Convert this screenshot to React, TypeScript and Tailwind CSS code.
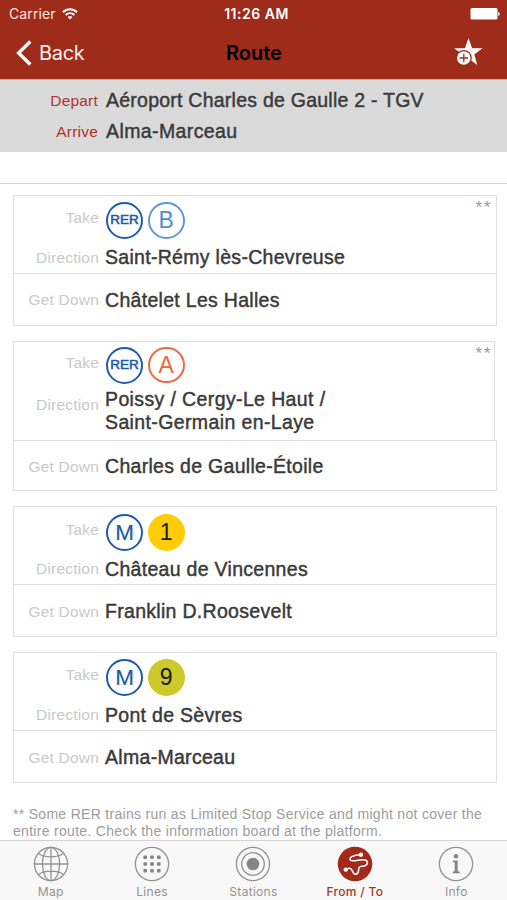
import type { ReactNode } from "react";

type Leg = {
	network: "RER" | "M";
	line: string;
	lineClass: string;
	direction: string[];
	getDown: string;
	limited?: boolean;
	cardClass: string;
	takeClass: string;
};

const legs: Leg[] = [
	{
		network: "RER",
		line: "B",
		lineClass: "border-2 border-[#5b9bd5] text-[#4d8fce]",
		direction: ["Saint-Rémy lès-Chevreuse"],
		getDown: "Châtelet Les Halles",
		limited: true,
		cardClass: "h-[131px]",
		takeClass: "pt-[6px] h-[47px]",
	},
	{
		network: "RER",
		line: "A",
		lineClass: "border-2 border-[#f06a45] text-[#ee6540]",
		direction: ["Poissy / Cergy-Le Haut /", "Saint-Germain en-Laye"],
		getDown: "Charles de Gaulle-Étoile",
		limited: true,
		cardClass: "h-[151px]",
		takeClass: "pt-[5px] h-[46px]",
	},
	{
		network: "M",
		line: "1",
		lineClass: "bg-[#ffcc05] text-[#1a1a1a]",
		direction: ["Château de Vincennes"],
		getDown: "Franklin D.Roosevelt",
		cardClass: "h-[131px]",
		takeClass: "pt-[7px] h-[47px]",
	},
	{
		network: "M",
		line: "9",
		lineClass: "bg-[#cdc82b] text-[#1a1a1a]",
		direction: ["Pont de Sèvres"],
		getDown: "Alma-Marceau",
		cardClass: "h-[131px]",
		takeClass: "pt-[6px] h-[47px]",
	},
];

function Label({
	children,
	color = "text-[#c9c9c9]",
	className = "",
}: {
	children: ReactNode;
	color?: string;
	className?: string;
}) {
	return (
		<span
			className={`w-[85px] shrink-0 text-right text-[15.5px] leading-5 tracking-[0.2px] ${color} ${className}`}
		>
			{children}
		</span>
	);
}

function Station({ children, className = "tracking-[0.3px]" }: { children: ReactNode; className?: string }) {
	return (
		<span
			className={`text-[19.5px] leading-[23.5px] whitespace-nowrap text-[#3a3a3a] [-webkit-text-stroke:0.45px_#3a3a3a] ${className}`}
		>
			{children}
		</span>
	);
}

function LegCard({ leg }: { leg: Leg }) {
	const multi = leg.direction.length > 1;
	return (
		<section className={`flex flex-col ${leg.cardClass}`}>
			<div
				className={`relative border border-b-0 border-[#dfdfdf] ${multi ? "mr-[2px] h-[99px]" : "h-[78px]"}`}
			>
				<div className={`flex items-start ${leg.takeClass}`}>
					<Label className="mt-[6px]">Take</Label>
					<span
						className={`ml-[7px] flex size-[37px] items-center justify-center rounded-full border-2 border-[#1f5ca9] text-[#1f5ca9] ${
							leg.network === "RER"
								? "text-[13.5px] [-webkit-text-stroke:0.6px_#1f5ca9]"
								: "text-[22.5px] [-webkit-text-stroke:0.2px_#1f5ca9]"
						}`}
					>
						{leg.network}
					</span>
					<span
						className={`ml-[5px] flex size-[36.5px] items-center justify-center rounded-full text-[23px] ${leg.lineClass}`}
					>
						{leg.line}
					</span>
				</div>
				<div className={`flex ${multi ? "items-start" : "h-[30px] items-center"}`}>
					<Label className={multi ? "mt-[7px]" : ""}>Direction</Label>
					<div className="ml-[6px] flex flex-col">
						{leg.direction.map((d) => (
							<Station key={d} className={multi ? "tracking-[0.38px]" : "tracking-[0.3px]"}>
								{d}
							</Station>
						))}
					</div>
				</div>
				{leg.limited && (
					<span
						className={`absolute top-0 text-[17px] leading-6 tracking-[1.6px] text-[#9a9a9a] ${multi ? "right-[2px]" : "right-[4px]"}`}
					>
						**
					</span>
				)}
			</div>
			<div className="flex flex-1 items-center border border-[#dfdfdf] pt-[2px]">
				<Label>Get Down</Label>
				<div className="ml-[6px] flex">
					<Station>{leg.getDown}</Station>
				</div>
			</div>
		</section>
	);
}

function Ring() {
	return <circle cx="18" cy="18" r="16.6" />;
}

const tabs: { label: string; icon: ReactNode }[] = [
	{
		label: "Map",
		icon: (
			<g fill="none" stroke="#929292" strokeWidth="1.3">
				<Ring />
				<ellipse cx="18" cy="18" rx="8.6" ry="16.6" />
				<path d="M18 1.4v33.2M1.4 18h33.2M5.5 7.5C12 12 24 12 30.5 7.5M5.5 28.5C12 24 24 24 30.5 28.5" />
			</g>
		),
	},
	{
		label: "Lines",
		icon: (
			<>
				<g fill="none" stroke="#929292" strokeWidth="1.3">
					<Ring />
				</g>
				<g fill="#858585">
					{[11.2, 18, 24.8].map((y) =>
						[11.2, 18, 24.8].map((x) => (
							<circle key={`${x}-${y}`} cx={x} cy={y} r="2" />
						)),
					)}
				</g>
			</>
		),
	},
	{
		label: "Stations",
		icon: (
			<>
				<g fill="none" stroke="#929292" strokeWidth="1.3">
					<Ring />
					<circle cx="18" cy="18" r="11.3" />
				</g>
				<circle cx="18" cy="18" r="6.3" fill="#858585" />
			</>
		),
	},
	{
		label: "From / To",
		icon: (
			<>
				<circle cx="18" cy="18" r="17.3" fill="#a12a1a" />
				<path
					d="M23.7 8.7C20 8.6 17 9.5 14.7 10.7C12 12.3 12.6 14.6 15.3 14.8C19.500 15 24 13.200 28 14C31.500 15 31.300 18.800 27.300 20C25 20.600 22.800 19.800 22 21.500C21.200 23.500 22.300 27.500 19.200 28.300C16.300 28.700 15.800 25.500 14.800 23.800C13.300 21.300 11 22 9 23.500"
					fill="none"
					stroke="#fff"
					strokeWidth="1.5"
					strokeLinecap="round"
				/>
				<circle cx="23.9" cy="8.7" r="2.2" fill="#fff" />
				<circle cx="8.8" cy="23.6" r="2.2" fill="#fff" />
			</>
		),
	},
	{
		label: "Info",
		icon: (
			<>
				<g fill="none" stroke="#929292" strokeWidth="1.3">
					<Ring />
				</g>
				<circle cx="18" cy="10.3" r="2.2" fill="#858585" />
				<path
					d="M14.8 14.6H19.7V25.5H21.7V27.2H14.6V25.5H16.7V16.3H14.8Z"
					fill="#858585"
				/>
			</>
		),
	},
];

export default function App() {
	return (
		<div className="flex h-[900px] w-[507px] flex-col overflow-hidden bg-white font-['Liberation_Sans',Arial,sans-serif]">
			<header className="h-[79px] shrink-0 bg-[#9f2b1b] font-['Inter',sans-serif] text-white">
				{/* Status bar */}
				<div className="grid h-7 grid-cols-3 items-center pr-[7px] pl-[9px] text-[14px] leading-7">
					<div className="flex items-center gap-[6px]">
						<span className="tracking-[0.1px] text-[#fbe3df]">Carrier</span>
						<svg width="16" height="12" viewBox="0 0 16 12" fill="none" stroke="#fff" strokeWidth="1.9">
							<path d="M1 4.2C5 .3 11 .3 15 4.2M3.6 7C6.2 4.5 9.8 4.5 12.4 7" />
							<path d="M8 11.5L5.6 9C7 7.7 9 7.7 10.4 9Z" fill="#fff" stroke="none" />
						</svg>
					</div>
					<span className="pl-1 text-center font-semibold tracking-[0.5px] whitespace-nowrap">
						11:26 AM
					</span>
					<svg className="justify-self-end" width="30" height="12" viewBox="0 0 30 12" fill="#fff">
						<rect x="0.5" y="0" width="27" height="11.5" rx="1.5" />
						<path d="M28.2 4C30.2 4.5 30.2 7.5 28.2 8Z" />
					</svg>
				</div>
				{/* Navigation bar */}
				<div className="grid h-[49px] grid-cols-3 items-center px-4">
					<div className="flex items-center gap-[7px]">
						<svg width="16" height="26" viewBox="0 0 16 26" fill="none" stroke="#fff" strokeWidth="3.4">
							<path d="M14.3 1.5L2.6 13L14.3 24.5" />
						</svg>
						<span className="text-[20px] leading-6 tracking-[-0.3px] text-[#fdeeea]">Back</span>
					</div>
					<span className="pl-px text-center text-[20px] font-semibold text-black">Route</span>
					<svg
						className="mr-2 mb-[2px] justify-self-end"
						width="30"
						height="30"
						viewBox="0 0 30 30"
					>
						<path
							d="M15.5 1L19.1 11.2H29.5L21.3 17.4L24.3 28L15.5 21.5L7 27.5L9.7 17.4L1 11.2H12Z"
							fill="#fff"
						/>
						<circle cx="10.8" cy="21" r="8" fill="#9f2b1b" />
						<circle cx="10.8" cy="21" r="6.8" fill="#fff" />
						<path d="M10.8 16.8V25.2M6.6 21H15" stroke="#9f2b1b" strokeWidth="1.3" />
					</svg>
				</div>
			</header>

			{/* Trip summary */}
			<div className="flex h-[73px] shrink-0 flex-col border-t border-[#d6a9a2] bg-[#dadada] pt-[5px] pl-[13px]">
				<div className="flex h-[31px] items-center">
					<Label color="text-[#b03325]">Depart</Label>
					<div className="ml-[8px] flex">
						<Station className="tracking-[0.24px]">Aéroport Charles de Gaulle 2 - TGV</Station>
					</div>
				</div>
				<div className="flex h-[31px] items-center">
					<Label color="text-[#b03325]">Arrive</Label>
					<div className="ml-[8px] flex">
						<Station className="tracking-[0.4px]">Alma-Marceau</Station>
					</div>
				</div>
			</div>
			<div className="h-8 shrink-0 border-b border-[#d4d4d4]" />

			<main className="flex min-h-0 flex-1 flex-col gap-[15px] pt-[11px] pr-[10px] pl-[13px]">
				{legs.map((leg) => (
					<LegCard key={leg.getDown} leg={leg} />
				))}
				<p className="mt-[8px] text-[14px] leading-[17px] tracking-[0.3px] whitespace-nowrap text-[#9c9c9c]">
					** Some RER trains run as Limited Stop Service and might not cover the
					<br />
					entire route. Check the information board at the platform.
				</p>
			</main>

			<nav className="grid h-[60px] shrink-0 grid-cols-5 border-t border-[#d2d2d2] bg-[#f8f8f8] font-['Inter',sans-serif]">
				{tabs.map((tab) => (
					<div key={tab.label} className="flex flex-col items-center pt-[5px]">
						<svg width="36" height="36" viewBox="0 0 36 36">
							{tab.icon}
						</svg>
						<span
							className={`mt-[2px] text-[12px] leading-4 tracking-[0.3px] ${
								tab.label === "From / To"
									? "font-medium text-[#a93426]"
									: "text-[#929292]"
							}`}
						>
							{tab.label}
						</span>
					</div>
				))}
			</nav>
		</div>
	);
}
